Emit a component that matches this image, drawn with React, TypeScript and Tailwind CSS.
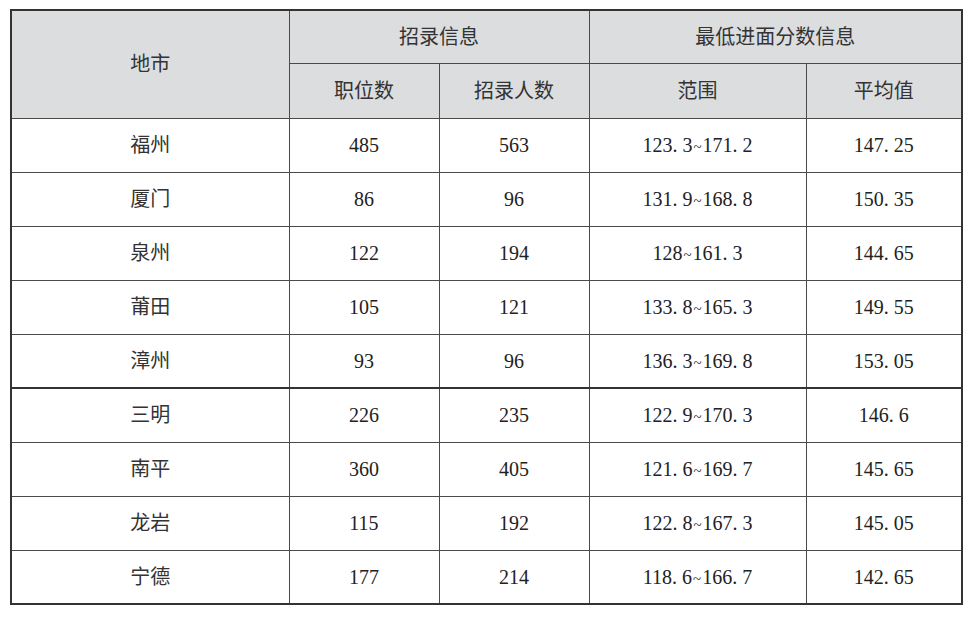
const rows = [
  ['福州', '485', '563', '123. 3~171. 2', '147. 25'],
  ['厦门', '86', '96', '131. 9~168. 8', '150. 35'],
  ['泉州', '122', '194', '128~161. 3', '144. 65'],
  ['莆田', '105', '121', '133. 8~165. 3', '149. 55'],
  ['漳州', '93', '96', '136. 3~169. 8', '153. 05'],
  ['三明', '226', '235', '122. 9~170. 3', '146. 6'],
  ['南平', '360', '405', '121. 6~169. 7', '145. 65'],
  ['龙岩', '115', '192', '122. 8~167. 3', '145. 05'],
  ['宁德', '177', '214', '118. 6~166. 7', '142. 65'],
];

const cell = 'border border-[#4a4a4a] text-center align-middle p-0';

// range values use a small tilde between the two scores
const Range = ({ v }: { v: string }) => {
  const [a, b] = v.split('~');
  return (
    <span>
      {a}
      <span className="text-[15px] mx-[1px]">~</span>
      {b}
    </span>
  );
};

export default function App() {
  return (
    <div
      className="w-[972px] h-[622px] bg-white pl-[10px] pt-[9px] text-[#222]"
      style={{ fontFamily: '"Liberation Serif", "Noto Sans CJK SC", serif' }}
    >
      <table className="border-collapse border-2 border-[#333] table-fixed w-[951px] text-[20px]">
        <colgroup>
          <col className="w-[278px]" />
          <col className="w-[150px]" />
          <col className="w-[150px]" />
          <col className="w-[217px]" />
          <col className="w-[156px]" />
        </colgroup>
        <thead className="bg-[#dcdddf]">
          <tr className="h-[53px]">
            <th rowSpan={2} className={`${cell} font-normal text-[#333]`}>地市</th>
            <th colSpan={2} className={`${cell} font-normal text-[#333]`}>招录信息</th>
            <th colSpan={2} className={`${cell} font-normal text-[#333]`}>最低进面分数信息</th>
          </tr>
          <tr className="h-[55px]">
            <th className={`${cell} font-normal text-[#333]`}>职位数</th>
            <th className={`${cell} font-normal text-[#333]`}>招录人数</th>
            <th className={`${cell} font-normal text-[#333]`}>范围</th>
            <th className={`${cell} font-normal text-[#333]`}>平均值</th>
          </tr>
        </thead>
        <tbody>
          {rows.map((r, i) => (
            <tr key={r[0]} className="h-[54px]">
              {r.map((v, j) => (
                <td
                  key={j}
                  className={`${cell} ${j === 0 ? 'text-[#333]' : ''} ${i === 5 ? 'border-t-2 border-t-[#333]' : ''}`}
                >
                  {j === 3 ? <Range v={v} /> : v}
                </td>
              ))}
            </tr>
          ))}
        </tbody>
      </table>
    </div>
  );
}
